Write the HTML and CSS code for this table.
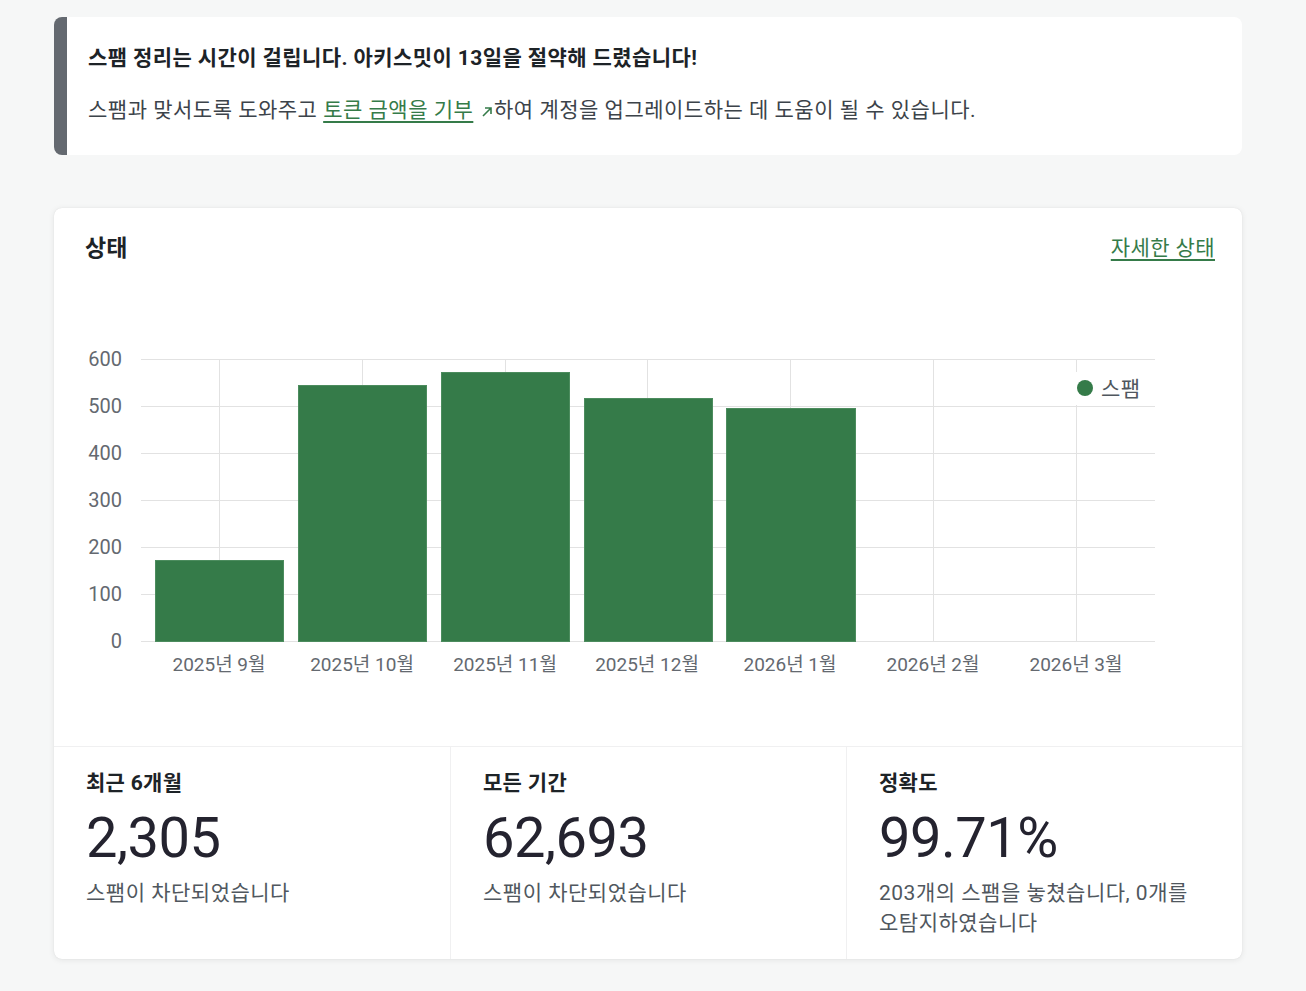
FILE: index.html
```html
<!DOCTYPE html>
<html lang="ko">
<head>
<meta charset="utf-8">
<title>Akismet</title>
<link rel="stylesheet" href="styles.css">
</head>
<body>
<div class="wrap">
  <div class="notice">
    <div class="notice-title">스팸 정리는 시간이 걸립니다. 아키스밋이 13일을 절약해 드렸습니다!</div>
    <div class="notice-text">스팸과 맞서도록 도와주고 <a href="#" class="link">토큰 금액을 기부</a> <svg class="arrow" width="12" height="12" viewBox="0 0 12 12" xmlns="http://www.w3.org/2000/svg"><path d="M2 10 L10 2 M4 2 H10 V8" fill="none" stroke="#357b49" stroke-width="1.6"/></svg>하여 계정을 업그레이드하는 데 도움이 될 수 있습니다.</div>
  </div>

  <div class="card">
    <div class="card-head">
      <h2 class="card-title">상태</h2>
      <a href="#" class="link head-link">자세한 상태</a>
    </div>
    <svg class="chart" width="1188" height="476" viewBox="0 0 1188 476" xmlns="http://www.w3.org/2000/svg">
      <g class="grid" stroke="#e2e2e2" stroke-width="1">
        <line x1="87" y1="89.5" x2="1101" y2="89.5"/>
        <line x1="87" y1="136.5" x2="1101" y2="136.5"/>
        <line x1="87" y1="183.5" x2="1101" y2="183.5"/>
        <line x1="87" y1="230.5" x2="1101" y2="230.5"/>
        <line x1="87" y1="277.5" x2="1101" y2="277.5"/>
        <line x1="87" y1="324.5" x2="1101" y2="324.5"/>
        <line x1="87" y1="371.5" x2="1101" y2="371.5"/>
        <line x1="165.5" y1="89" x2="165.5" y2="371"/>
        <line x1="308.5" y1="89" x2="308.5" y2="371"/>
        <line x1="451.5" y1="89" x2="451.5" y2="371"/>
        <line x1="593.5" y1="89" x2="593.5" y2="371"/>
        <line x1="736.5" y1="89" x2="736.5" y2="371"/>
        <line x1="879.5" y1="89" x2="879.5" y2="371"/>
        <line x1="1022.5" y1="89" x2="1022.5" y2="371"/>
      </g>
      <g fill="#357b49" stroke="#4c8c5e" stroke-width="1">
        <rect x="101.5" y="290.5" width="128" height="81"/>
        <rect x="244.5" y="115.5" width="128" height="256"/>
        <rect x="387.5" y="102.5" width="128" height="269"/>
        <rect x="530.5" y="128.5" width="128" height="243"/>
        <rect x="672.5" y="138.5" width="129" height="233"/>
      </g>
      <g class="ylab" text-anchor="end">
        <text x="68" y="96">600</text>
        <text x="68" y="143">500</text>
        <text x="68" y="190">400</text>
        <text x="68" y="237">300</text>
        <text x="68" y="284">200</text>
        <text x="68" y="331">100</text>
        <text x="68" y="378">0</text>
      </g>
      <g class="xlab" text-anchor="middle">
        <text x="165" y="401">2025년 9월</text>
        <text x="308" y="401">2025년 10월</text>
        <text x="451" y="401">2025년 11월</text>
        <text x="593" y="401">2025년 12월</text>
        <text x="736" y="401">2026년 1월</text>
        <text x="879" y="401">2026년 2월</text>
        <text x="1022" y="401">2026년 3월</text>
      </g>
      <rect x="1016" y="102" width="79" height="33" fill="#ffffff"/>
      <circle cx="1031" cy="118" r="8" fill="#357b49"/>
      <text class="legend" x="1047" y="126">스팸</text>
    </svg>
    <div class="stats">
      <div class="stat">
        <div class="stat-label">최근 6개월</div>
        <div class="stat-num">2,305</div>
        <div class="stat-sub">스팸이 차단되었습니다</div>
      </div>
      <div class="stat">
        <div class="stat-label">모든 기간</div>
        <div class="stat-num">62,693</div>
        <div class="stat-sub">스팸이 차단되었습니다</div>
      </div>
      <div class="stat">
        <div class="stat-label">정확도</div>
        <div class="stat-num">99.71%</div>
        <div class="stat-sub">203개의 스팸을 놓쳤습니다, 0개를<br>오탐지하였습니다</div>
      </div>
    </div>
  </div>
</div>
</body>
</html>
```

FILE: styles.css
```css
* { box-sizing: border-box; }
html, body { margin: 0; padding: 0; }
body {
  background: #f6f7f7;
  font-family: Roboto, "Noto Sans CJK KR", sans-serif;
  color: #1d2327;
  width: 1306px;
  height: 991px;
  overflow: hidden;
}
.wrap {
  width: 1188px;
  margin-left: 54px;
  padding-top: 17px;
}
.notice {
  background: #ffffff;
  border-left: 13px solid #646970;
  border-radius: 8px;
  height: 138px;
  padding: 27px 24px 0 21px;
}
.notice-title {
  font-size: 21px;
  line-height: 28px;
  font-weight: 700;
  color: #1d2327;
  letter-spacing: 0.4px;
}
.notice-text {
  margin-top: 23px;
  font-size: 21px;
  line-height: 30px;
  color: #3c434a;
  letter-spacing: 0.5px;
}
.link {
  color: #357b49;
  text-decoration: underline;
  text-underline-offset: 4px;
  text-decoration-thickness: 2px;
}
.arrow {
  display: inline-block;
  vertical-align: -1px;
  margin: 0 1px 0 2px;
}
.card {
  margin-top: 53px;
  background: #ffffff;
  border-radius: 8px;
  box-shadow: 0 1px 6px rgba(0, 0, 0, 0.08), 0 0 1px rgba(0, 0, 0, 0.12);
  height: 751px;
  overflow: hidden;
}
.card-head {
  height: 62px;
  padding: 26px 27px 0 31px;
  display: flex;
  justify-content: space-between;
  align-items: flex-start;
}
.card-title {
  margin: 0;
  font-size: 23px;
  line-height: 29px;
  font-weight: 700;
  color: #1d2327;
}
.head-link {
  font-size: 21px;
  line-height: 29px;
  letter-spacing: 0.4px;
}
.chart {
  display: block;
  margin-top: 0;
}
.ylab text, .xlab text {
  font-family: Roboto, "Noto Sans CJK KR", sans-serif;
  font-size: 19px;
  fill: #646970;
}
.ylab text { font-size: 20px; }
.legend {
  font-family: Roboto, "Noto Sans CJK KR", sans-serif;
  font-size: 21px;
  fill: #50575e;
  letter-spacing: 0.5px;
}
.stats {
  display: grid;
  grid-template-columns: 396px 396px 396px;
  border-top: 1px solid #f0f0f1;
  height: 213px;
}
.stat {
  padding: 23px 24px 0 32px;
}
.stat + .stat {
  border-left: 1px solid #f0f0f1;
  padding-left: 32px;
}
.stat-label {
  font-size: 21px;
  line-height: 26px;
  font-weight: 700;
  color: #1d2327;
  letter-spacing: 0.3px;
}
.stat-num {
  margin-top: 10px;
  font-size: 56px;
  line-height: 64px;
  font-weight: 400;
  color: #24232f;
  letter-spacing: -0.5px;
}
.stat-sub {
  margin-top: 8px;
  font-size: 21px;
  line-height: 30px;
  color: #50575e;
  letter-spacing: 0.5px;
}
```
